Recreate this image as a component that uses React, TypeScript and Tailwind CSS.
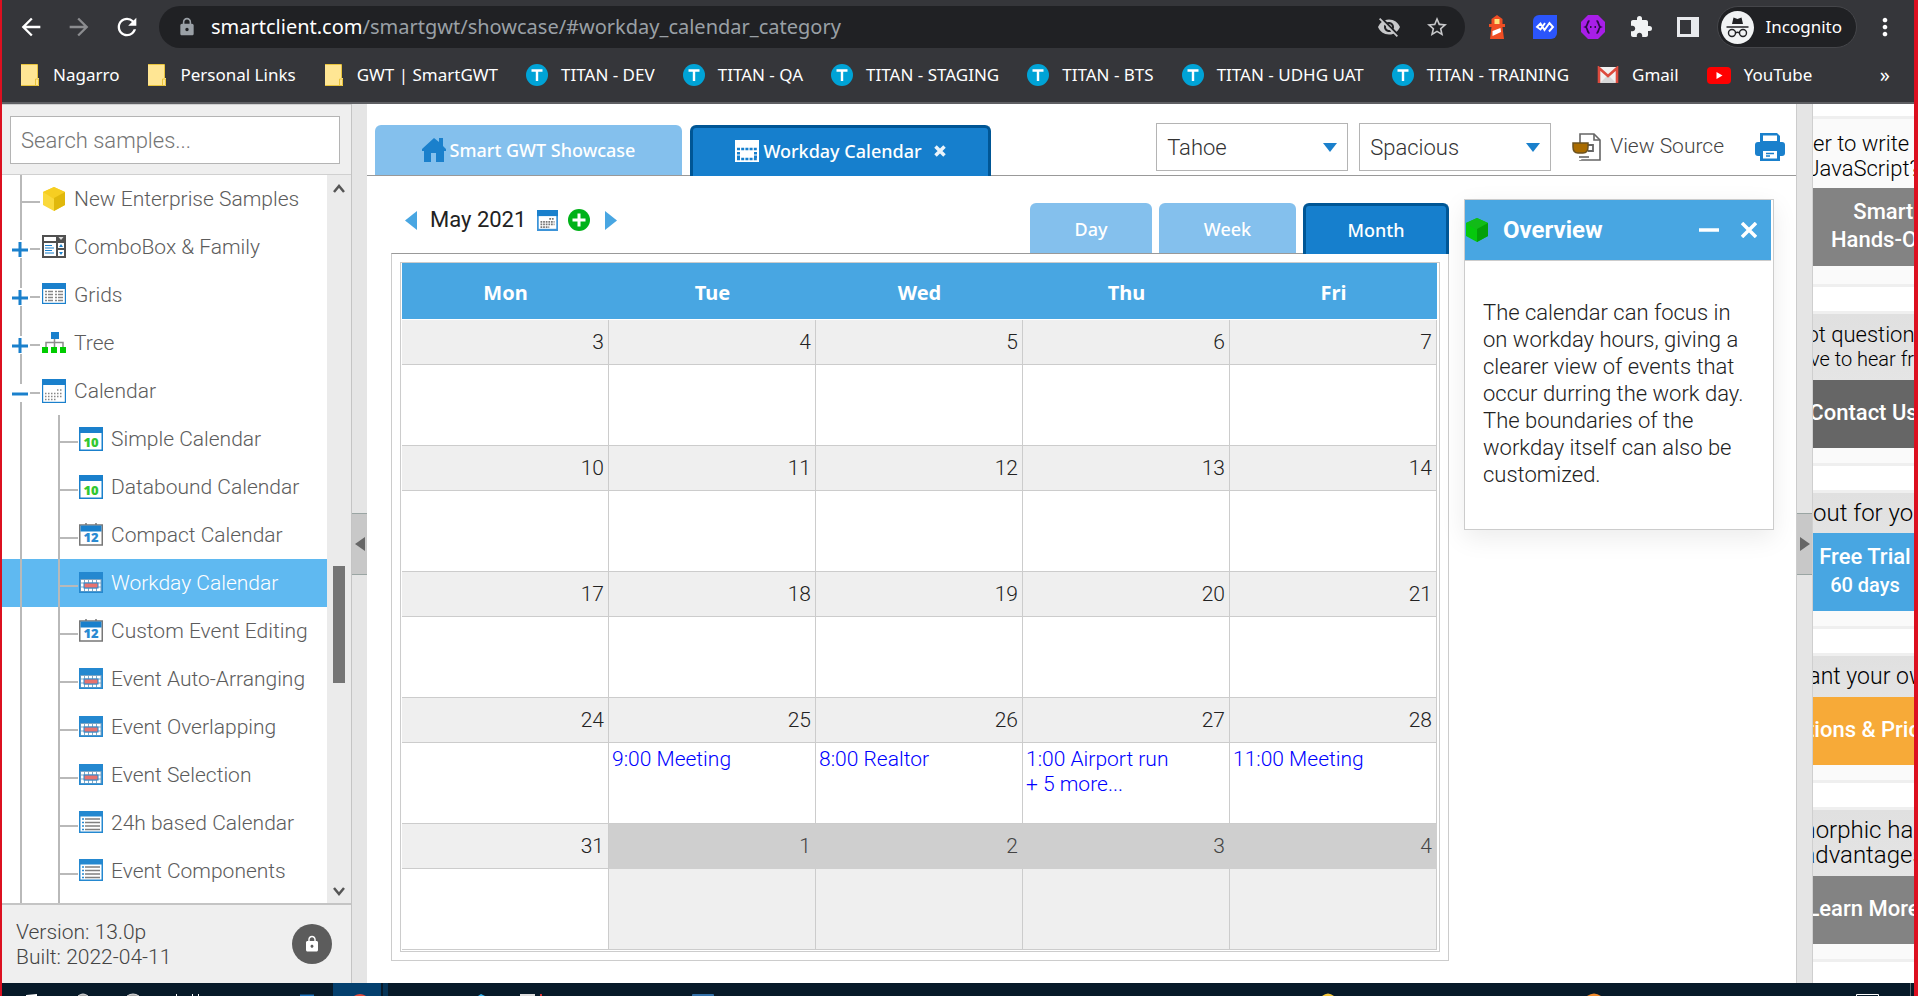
import React from "react";
import {
  MdArrowBack,
  MdArrowForward,
  MdRefresh,
  MdLock,
  MdStarBorder,
  MdExtension,
  MdMoreVert,
  MdVisibilityOff,
} from "react-icons/md";

type IconKind = "cube" | "combo" | "grid" | "tree" | "cal" | "ten" | "twelve" | "work" | "list";

function Cube({ top, left, right }: { top: string; left: string; right: string }) {
  return (
    <svg width="24" height="24" viewBox="0 0 24 24" aria-hidden="true">
      <path d="M12 0 23 5v13l-11 6L1 18V5z" fill={left} />
      <path d="M12 0 23 5l-11 7L1 5z" fill={top} />
      <path d="M12 11 23 5v13l-11 6z" fill={right} />
    </svg>
  );
}

function TreeIcon({ kind }: { kind: IconKind }) {
  if (kind === "cube") return <Cube top="#f6ce22" left="#fad93c" right="#e0b80c" />;
  if (kind === "combo")
    return (
      <svg width="24" height="24" viewBox="0 0 24 24" aria-hidden="true">
        <rect width="24" height="23" fill="#505050" />
        <path d="M2 2h12v4H2zM2 8h12v13H2zM16 8h6v5h-6zM16 15h6v6h-6z" fill="#fff" />
        <path d="M16.500 2h5l-2.500 3z" fill="#ddd" />
        <path d="M3 10.500h7M3 13h9M3 15.500h7M3 18h9" stroke="#1a80cc" strokeWidth="1.200" />
        <path d="m17 12 2-3 2 3zM17 17l2 3 2-3z" fill="#1a80cc" />
      </svg>
    );
  if (kind === "tree")
    return (
      <svg width="24" height="24" viewBox="0 0 24 24" aria-hidden="true">
        <path d="M12.500 8v4M4 16v-4.500h17V16M12.500 11v5" fill="none" stroke="#8c8c8c" strokeWidth="1.500" />
        <rect x="9" y="1" width="8" height="7" fill="#1a80cc" />
        <path d="M0 16h6v6H0zM9 16h6v6H9zM18 16h6v6h-6z" fill="#0c0" />
      </svg>
    );
  if (kind === "ten" || kind === "twelve") {
    const ten = kind === "ten";
    return (
      <svg width="24" height="24" viewBox="0 0 24 24" aria-hidden="true">
        {!ten && <path d="M7 0v3M17 0v3" stroke="#777" strokeWidth="1.500" />}
        <rect x="0.750" y={ten ? 1 : 2} width="22.500" height={ten ? 22.25 : 20} fill="#fff" stroke={ten ? "#1a80cc" : "#777"} strokeWidth="1.500" />
        <rect x={ten ? 0 : 1.5} y={ten ? 0 : 2.500} width={ten ? 24 : 21} height="6" fill="#1a80cc" />
        <text x="12" y={ten ? 19.5 : 19} textAnchor="middle" fontSize="13" fontWeight="800" fontFamily="Open Sans, sans-serif" fill={ten ? "#32c832" : "#2a8bd2"}>
          {ten ? "10" : "12"}
        </text>
      </svg>
    );
  }
  if (kind === "work")
    return (
      <svg width="24" height="24" viewBox="0 0 24 24" aria-hidden="true">
        <rect y="1" width="24" height="21" fill="#2488d0" />
        <rect x="1.500" y="8" width="21" height="12.500" fill="#7fa6c4" />
        <path
          d="M2 9h3v2.500H2zM6 9h3v2.500H6zM10 9h3v2.500h-3zM14 9h3v2.500h-3zM18 9h3.500v2.500H18zM2 12.500h3v3H2zM2 16.500h3v3.500H2zM18 12.500h3.500v3H18zM18 16.500h3.500v3.500H18zM6 17.500h3V20H6zM10 17.500h3V20h-3zM14 17.500h3V20h-3z"
          fill="#fff"
        />
        <rect x="5" y="12" width="14" height="5" fill="#e8736f" stroke="#2488d0" strokeWidth="1" />
      </svg>
    );
  if (kind === "list")
    return (
      <svg width="24" height="24" viewBox="0 0 24 24" aria-hidden="true">
        <rect y="0" width="24" height="22" fill="#2488d0" />
        <rect x="1.500" y="5.500" width="21" height="15" fill="#fff" />
        <path d="M6 8h15M6 11.500h15M6 15h15M6 18.500h15" stroke="#808080" strokeWidth="1.500" />
        <path d="M3 8h2M3 11.500h2M3 15h2M3 18.500h2" stroke="#2488d0" strokeWidth="1.500" />
      </svg>
    );
  return (
    <svg width="24" height="24" viewBox="0 0 24 24" aria-hidden="true">
      <rect width="24" height={kind === "grid" ? 21 : 24} fill="#1a80cc" />
      <rect x="1.200" y="6" width="21.600" height={kind === "grid" ? 13.8 : 16.8} fill="#fff" />
      {kind === "grid" ? (
        <>
          <path d="M3 8.500h8M13 8.500h8M3 11.500h8M13 11.500h8M3 14.500h8M13 14.500h8M3 17.500h8M13 17.500h8" stroke="#888" strokeWidth="1.300" />
          <path d="M5.500 7v12M15.500 7v12" stroke="#fff" strokeWidth="1" />
        </>
      ) : (
        <path d="M15 11h6M3 14.500h18M3 17.500h18M3 20.500h11" stroke="#888" strokeWidth="1.600" strokeDasharray="1.500 1.500" />
      )}
    </svg>
  );
}

function Guide({ level, mark }: { level: number; mark?: "plus" | "minus" }) {
  if (level === 1)
    return (
      <svg width="77" height="48" className="shrink-0" aria-hidden="true">
        <path d="M19 0v48M57 0v48M58 27h18" stroke="#b9b9b9" strokeWidth="2" />
      </svg>
    );
  return (
    <svg width="40" height="48" className="shrink-0" aria-hidden="true">
      <path d={mark ? "M19 0v17M19 35v13M28 26h10" : "M19 0v48M20 27h18"} stroke="#b9b9b9" strokeWidth="2" />
      {mark && <path d={mark === "plus" ? "M10 27h16M18 19v15" : "M10 27h16"} stroke="#1a80cc" strokeWidth="3" />}
    </svg>
  );
}

const treeRows: { label: string; icon: IconKind; level: number; mark?: "plus" | "minus"; selected?: boolean }[] = [
  { label: "New Enterprise Samples", icon: "cube", level: 0 },
  { label: "ComboBox & Family", icon: "combo", level: 0, mark: "plus" },
  { label: "Grids", icon: "grid", level: 0, mark: "plus" },
  { label: "Tree", icon: "tree", level: 0, mark: "plus" },
  { label: "Calendar", icon: "cal", level: 0, mark: "minus" },
  { label: "Simple Calendar", icon: "ten", level: 1 },
  { label: "Databound Calendar", icon: "ten", level: 1 },
  { label: "Compact Calendar", icon: "twelve", level: 1 },
  { label: "Workday Calendar", icon: "work", level: 1, selected: true },
  { label: "Custom Event Editing", icon: "twelve", level: 1 },
  { label: "Event Auto-Arranging", icon: "work", level: 1 },
  { label: "Event Overlapping", icon: "work", level: 1 },
  { label: "Event Selection", icon: "work", level: 1 },
  { label: "24h based Calendar", icon: "list", level: 1 },
  { label: "Event Components", icon: "list", level: 1 },
];

function BookmarkIcon({ kind }: { kind: string }) {
  if (kind === "folder")
    return (
      <svg width="20" height="22" viewBox="0 0 20 22" aria-hidden="true">
        <path d="M1 0h16v14h2v8H1z" fill="#ffe694" />
        <path d="M1 .500h16.500V14M1 21.500h17.500V15h-3v6" fill="none" stroke="#e9c43c" />
      </svg>
    );
  if (kind === "titan")
    return (
      <svg width="22" height="22" viewBox="0 0 22 22" aria-hidden="true">
        <circle cx="11" cy="11" r="11" fill="#00a3d6" />
        <path d="M5.500 6.500h11M11 6.500v10.500" stroke="#fff" strokeWidth="2.400" />
      </svg>
    );
  if (kind === "gmail")
    return (
      <svg width="22" height="18" viewBox="0 0 22 18" aria-hidden="true">
        <rect x="1" y="1" width="20" height="16" rx="1" fill="#f1f1f1" />
        <path d="m3 17 8-8 8 8z" fill="#d8d8d8" />
        <path d="M2 17V2l9 8 9-8v15" fill="none" stroke="#dd4b3e" strokeWidth="2.600" />
      </svg>
    );
  return (
    <svg width="24" height="17" viewBox="0 0 24 17" aria-hidden="true">
      <rect width="24" height="17" rx="4" fill="#f00" />
      <path d="m9.500 5 6 3.500-6 3.500z" fill="#fff" />
    </svg>
  );
}

const bookmarks: [string, string][] = [
  ["folder", "Nagarro"],
  ["folder", "Personal Links"],
  ["folder", "GWT | SmartGWT"],
  ["titan", "TITAN - DEV"],
  ["titan", "TITAN - QA"],
  ["titan", "TITAN - STAGING"],
  ["titan", "TITAN - BTS"],
  ["titan", "TITAN - UDHG UAT"],
  ["titan", "TITAN - TRAINING"],
  ["gmail", "Gmail"],
  ["youtube", "YouTube"],
];

function BrowserChrome() {
  return (
    <header className="h-[104px] shrink-0 border-b-2 border-[#5f6064] bg-[#35363a] font-['Noto_Sans','Open_Sans',sans-serif] text-white">
      <div className="flex h-[54px] items-center pr-[15px] pl-[15px]">
        <div className="flex w-[142px] items-center gap-5 text-[28px]">
          <button aria-label="Back"><MdArrowBack /></button>
          <button aria-label="Forward" className="text-[#8b8c8f]"><MdArrowForward /></button>
          <button aria-label="Reload"><MdRefresh /></button>
        </div>
        <div className="flex h-[42px] flex-1 items-center rounded-full bg-[#202124] pr-4 pl-[18px]">
          <MdLock className="mr-[14px] text-[20px] text-[#9aa0a6]" />
          <span className="flex-1 text-[20px] text-[#9aa0a6]">
            <span className="text-white">smartclient.com</span>/smartgwt/showcase/#workday_calendar_category
          </span>
          <button aria-label="Tracking protection" className="mr-6 text-[24px] text-[#c7c8ca]"><MdVisibilityOff /></button>
          <button aria-label="Bookmark this page" className="text-[24px] text-[#c7c8ca]"><MdStarBorder /></button>
        </div>
        <div className="ml-5 flex items-center gap-6">
          <svg width="24" height="26" viewBox="0 0 24 26" aria-hidden="true">
            <path d="M12 1 6.500 5v5H4v3h2.500L5 25h14l-1.500-12H20v-3h-2.500V5z" fill="#f04e23" />
            <rect x="9.500" y="5" width="5" height="5" fill="#ffe27a" />
            <path d="m7.500 17 8-3 .5 4-8.500 4z" fill="#fff" />
          </svg>
          <svg width="24" height="24" viewBox="0 0 24 24" aria-hidden="true">
            <path d="M6 0h18v18a6 6 0 0 1-6 6H0V6a6 6 0 0 1 6-6z" fill="#2b55fb" />
            <path d="m12 8-4.500 6.500L4 12l3.500-3.500 4 6.500 5-7 3.500 4-4 4.500" fill="none" stroke="#fff" strokeWidth="1.900" />
          </svg>
          <svg width="24" height="24" viewBox="0 0 24 24" aria-hidden="true">
            <path d="M7 0h10l7 7v10l-7 7H7l-7-7V7z" fill="#a81ee8" />
            <path d="M8.500 6C6 6 7 11 4.500 12 7 13 6 18 8.500 18M15.500 6c2.500 0 1.500 5 4 6-2.500 1-1.500 6-4 6" fill="none" stroke="#2b0b45" strokeWidth="1.800" />
            <path d="M9 12h1.500M13.500 12H15" stroke="#2b0b45" strokeWidth="2" />
          </svg>
          <MdExtension className="text-[24px] text-[#f1f3f4]" />
          <svg width="22" height="22" viewBox="0 0 22 22" aria-hidden="true">
            <path fillRule="evenodd" d="M0 1h22v20H0zM3 4v14h11V4z" fill="#e8eaed" />
          </svg>
        </div>
        <button className="ml-[18px] flex h-[42px] items-center gap-3 rounded-full border border-[#45464a] bg-[#202124] pr-[14px] pl-[3px]">
          <svg width="33" height="33" viewBox="0 0 33 33" aria-hidden="true">
            <circle cx="16.500" cy="16.500" r="16.500" fill="#f1f3f4" />
            <path d="M11 13 12.500 6.500 16.500 8l4-1.500L22 13z" fill="#202124" />
            <path d="M5.500 16h22" stroke="#202124" strokeWidth="1.500" />
            <circle cx="11" cy="22" r="3.500" fill="none" stroke="#202124" strokeWidth="1.400" />
            <circle cx="22" cy="22" r="3.500" fill="none" stroke="#202124" strokeWidth="1.400" />
            <path d="M14.500 22q2-1.500 4 0" fill="none" stroke="#202124" strokeWidth="1.300" />
          </svg>
          <span className="text-[17px]">Incognito</span>
        </button>
        <button aria-label="Menu" className="ml-[14px] text-[28px]"><MdMoreVert /></button>
      </div>
      <nav className="flex h-[42px] items-center pl-[18px] pr-6 text-[17px]">
        <ul className="flex flex-1 items-center gap-7">
          {bookmarks.map(([kind, label]) => (
            <li key={label}>
              <a href="#bookmark" className="flex items-center gap-[13px] whitespace-nowrap">
                <BookmarkIcon kind={kind} />
                {label}
              </a>
            </li>
          ))}
        </ul>
        <button aria-label="More bookmarks" className="text-[20px]">»</button>
      </nav>
    </header>
  );
}

function Sidebar() {
  return (
    <aside className="flex w-[350px] shrink-0 flex-col border-r border-[#c4c4c4] bg-white font-light">
      <div className="h-[71px] shrink-0 border-y border-[#d0d0d0] bg-[#efefef] pt-[11px] pr-[11px] pl-2">
        <input
          type="text"
          aria-label="Search samples"
          placeholder="Search samples..."
          className="h-12 w-full border border-[#b4b4b4] bg-white px-[10px] text-[22px] font-light placeholder:text-[#757575]"
        />
      </div>
      <div className="flex min-h-0 flex-1">
        <ul className="flex flex-1 flex-col overflow-hidden text-[21px] text-[#5c5c5c]">
          {treeRows.map((row) => (
            <li key={row.label} className={row.selected ? "flex h-12 shrink-0 items-center bg-[#5fb9f1] text-white" : "flex h-12 shrink-0 items-center"}>
              <Guide level={row.level} mark={row.mark} />
              <TreeIcon kind={row.icon} />
              <a href="#sample" className="ml-2 pt-0.5 whitespace-nowrap">{row.label}</a>
            </li>
          ))}
          <li className="min-h-0 flex-1 overflow-hidden">
            <svg width="77" height="48" aria-hidden="true">
              <path d="M19 0v48M57 0v48" stroke="#b9b9b9" strokeWidth="2" />
            </svg>
          </li>
        </ul>
        <div className="flex w-6 flex-col items-center bg-[#ebebeb]">
          <svg width="24" height="24" aria-hidden="true"><path d="m7 17 5-6 5 6" fill="none" stroke="#555" strokeWidth="2.500" /></svg>
          <div className="flex-[367]" />
          <div className="w-3 flex-[117] bg-[#757575]" />
          <div className="flex-[196]" />
          <svg width="24" height="24" aria-hidden="true"><path d="m7 9 5 6 5-6" fill="none" stroke="#555" strokeWidth="2.500" /></svg>
        </div>
      </div>
      <div className="flex h-20 shrink-0 items-center justify-between border-t-2 border-[#c4c4c4] bg-[#efefef] pr-[19px] pl-[14px] text-[21px] leading-[25px] text-[#444]">
        <p className="pt-px">Version: 13.0p<br />Built: 2022-04-11</p>
        <button aria-label="Lock" className="flex size-10 items-center justify-center rounded-full bg-[#5c5c5c]">
          <MdLock className="text-[18px] text-white" />
        </button>
      </div>
    </aside>
  );
}

function Splitter({ flip }: { flip?: boolean }) {
  return (
    <div className={flip ? "flex w-4 shrink-0 flex-col justify-center border-r border-[#cfcfcf] bg-[#e5e5e5]" : "flex w-[15px] shrink-0 flex-col justify-center bg-[#e5e5e5]"}>
      <button aria-label={flip ? "Collapse right panel" : "Collapse left panel"} className="flex h-[62px] items-center justify-center border-y border-[#9aa5a3] bg-[#c8c8c8]">
        <svg width="12" height="16" viewBox="0 0 12 16" aria-hidden="true">
          <path d={flip ? "M1 1v14l10-7z" : "M11 1v14L1 8z"} fill="#666" />
        </svg>
      </button>
    </div>
  );
}

function SelectBox({ label, value }: { label: string; value: string }) {
  return (
    <div className="relative">
      <select aria-label={label} defaultValue={value} className="h-12 w-48 appearance-none border border-[#b4b4b4] bg-white px-[10px] text-[22px] font-light text-[#333]">
        <option>{value}</option>
      </select>
      <svg width="14" height="9" className="pointer-events-none absolute top-5 right-[11px]" aria-hidden="true">
        <path d="M0 0h14L7 9z" fill="#1a80cc" />
      </svg>
    </div>
  );
}

function TopBar() {
  return (
    <div className="flex h-[72px] items-end border-b border-[#999] pl-2">
      <div role="tablist" className="flex gap-2 font-['Noto_Sans','Open_Sans',sans-serif] text-[18px] font-medium text-white">
        <button role="tab" className="flex h-[50px] w-[307px] items-center justify-center gap-1 rounded-t-md bg-[#84c0ed]">
          <svg width="24" height="24" viewBox="0 0 24 24" aria-hidden="true">
            <path d="M12 0 0 11v2h2v11h7v-9h5v9h8V13h2v-2l-3-3V0h-4v4z" fill="#1a80cc" />
          </svg>
          Smart GWT Showcase
        </button>
        <button role="tab" aria-selected="true" className="-mb-px flex h-[51px] w-[301px] items-center justify-center gap-1 rounded-t-md border-x-3 border-t-3 border-[#005695] bg-[#167fcd] pb-0.5">
          <svg width="24" height="22" viewBox="0 0 24 22" aria-hidden="true">
            <rect width="24" height="22" fill="#fff" />
            <path d="M2 9h20M2 19h20" stroke="#167fcd" strokeWidth="2.500" strokeDasharray="3 1.200" />
            <path d="M3.500 12v6M20.500 12v6" stroke="#167fcd" strokeWidth="3" strokeDasharray="2.400 1.200" />
          </svg>
          Workday Calendar
          <svg width="12" height="12" viewBox="0 0 12 12" className="ml-2" aria-hidden="true">
            <path d="m1.500 1.500 9 9M10.500 1.500l-9 9" stroke="#eaf4fb" strokeWidth="3.500" />
          </svg>
        </button>
      </div>
      <div className="mb-1 ml-auto flex items-center gap-[11px] pr-[11px]">
        <SelectBox label="Skin" value="Tahoe" />
        <SelectBox label="Density" value="Spacious" />
        <button className="ml-[10px] flex items-center gap-[9px] text-[21px] font-light text-[#444]">
          <svg width="29" height="28" viewBox="0 0 29 28" aria-hidden="true">
            <path d="M8 1h14l6 6v20H8z" fill="#fff" stroke="#666" strokeWidth="1.600" />
            <path d="M22 1v6h6" fill="none" stroke="#666" strokeWidth="1.600" />
            <path d="M16 12h5v6h-5" fill="none" stroke="#666" strokeWidth="1.800" />
            <path d="M8 10v17" stroke="#fff" strokeWidth="2.500" />
            <path d="M1 10h15v4q0 6-5 6H6q-5 0-5-6z" fill="#aa6c00" stroke="#6b5220" strokeWidth="1.500" />
            <path d="M7 24h10" stroke="#666" strokeWidth="1.600" />
          </svg>
          View Source
        </button>
        <button aria-label="Print" className="ml-5">
          <svg width="30" height="28" viewBox="0 0 30 28" aria-hidden="true">
            <path d="M5 0h17l3 3v6H5z" fill="#1a80cc" />
            <path d="M8 2.500h14V8H8z" fill="#fff" />
            <rect y="9" width="30" height="14" rx="3" fill="#1a80cc" />
            <path d="M5 16h20v12H5z" fill="#1a80cc" />
            <path d="M8 18h14v7.500H8z" fill="#fff" />
            <path d="M11 20.500h8M11 23h4" stroke="#1a80cc" strokeWidth="1.400" />
          </svg>
        </button>
      </div>
    </div>
  );
}

const weeks: { days: number[]; events?: Record<number, string[]>; otherFrom?: number }[] = [
  { days: [3, 4, 5, 6, 7] },
  { days: [10, 11, 12, 13, 14] },
  { days: [17, 18, 19, 20, 21] },
  {
    days: [24, 25, 26, 27, 28],
    events: { 25: ["9:00 Meeting"], 26: ["8:00 Realtor"], 27: ["1:00 Airport run", "+ 5 more..."], 28: ["11:00 Meeting"] },
  },
  { days: [31, 1, 2, 3, 4], otherFrom: 1 },
];

function Calendar() {
  return (
    <section className="min-w-0 flex-1">
      <div className="flex h-[53px] items-end">
        <div className="mb-[19px] flex items-center pl-[14px] text-[22px] leading-7 text-[#222]">
          <button aria-label="Previous month">
            <svg width="12" height="19" aria-hidden="true"><path d="M12 0v19L0 9.500z" fill="#48a6e2" /></svg>
          </button>
          <span className="ml-[13px]">May 2021</span>
          <button aria-label="Pick a month" className="ml-[11px]">
            <svg width="21" height="21" viewBox="0 0 24 24" aria-hidden="true">
              <rect width="24" height="24" fill="#3d94d8" />
              <rect width="24" height="7" fill="#1a80cc" />
              <rect x="2" y="7" width="20" height="14.500" fill="#fff" />
              <path d="M14 10h6M4 13.500h16M4 16.500h16M4 19.500h10" stroke="#777" strokeWidth="2" strokeDasharray="2 1" />
            </svg>
          </button>
          <button aria-label="Add event" className="ml-[10px]">
            <svg width="22" height="22" viewBox="0 0 22 22" aria-hidden="true">
              <circle cx="11" cy="11" r="11" fill="#00b219" />
              <path d="M11 4.500v13M4.500 11h13" stroke="#fff" strokeWidth="3" />
            </svg>
          </button>
          <button aria-label="Next month" className="ml-[15px]">
            <svg width="12" height="19" aria-hidden="true"><path d="M0 0v19l12-9.500z" fill="#48a6e2" /></svg>
          </button>
        </div>
        <div role="tablist" className="ml-auto flex gap-[7px] font-['Noto_Sans','Open_Sans',sans-serif] text-[18px] font-medium text-white">
          <button role="tab" className="h-[50px] w-[122px] rounded-t-md bg-[#84c0ed] pt-0.5">Day</button>
          <button role="tab" className="h-[50px] w-[137px] rounded-t-md bg-[#84c0ed] pt-0.5">Week</button>
          <button role="tab" aria-selected="true" className="relative -mb-px h-[51px] w-[146px] rounded-t-md border-x-3 border-t-3 border-[#005695] bg-[#167fcd]">Month</button>
        </div>
      </div>
      <div className="border border-t-[#999] border-r-[#ccc] border-b-[#ccc] border-l-[#ccc] p-2">
        <div className="border border-[#ccc] pr-0.5 pb-px pl-px">
          <table className="w-full table-fixed border-separate border-spacing-0">
            <thead>
              <tr className="h-[57px]">
                {["Mon", "Tue", "Wed", "Thu", "Fri"].map((d) => (
                  <th key={d} className="border-b border-white bg-[#48a6e2] p-0 pt-1 font-['Noto_Sans','Open_Sans',sans-serif] text-[20px] font-bold text-white">{d}</th>
                ))}
              </tr>
            </thead>
            {weeks.map((week) => (
              <tbody key={week.days[0]}>
                <tr className="h-[45px]">
                  {week.days.map((day, i) => (
                    <td
                      key={day}
                      className={
                        week.otherFrom !== undefined && i >= week.otherFrom
                          ? "border-r border-b border-[#cfcfcf] bg-[#cfcfcf] p-0 pt-0.5 pr-1 text-right text-[21px] font-light text-[#444]"
                          : "border-r border-b border-[#ccc] bg-[#efefef] p-0 pt-0.5 pr-1 text-right text-[21px] font-light text-[#222]"
                      }
                    >
                      {day}
                    </td>
                  ))}
                </tr>
                <tr className="h-[81px]">
                  {week.days.map((day, i) => (
                    <td
                      key={day}
                      className={
                        week.otherFrom !== undefined && i >= week.otherFrom
                          ? "border-r border-b border-[#ccc] bg-[#efefef] p-0"
                          : "border-r border-b border-[#ccc] p-0 pt-1 pl-[3px] align-top text-[21px] leading-[25px] font-light whitespace-nowrap text-[#00f]"
                      }
                    >
                      {week.events?.[day]?.map((text) => (
                        <a key={text} href="#event" className="block">{text}</a>
                      ))}
                    </td>
                  ))}
                </tr>
              </tbody>
            ))}
          </table>
        </div>
      </div>
    </section>
  );
}

function Overview() {
  return (
    <section className="w-[310px] shrink-0 self-start border border-[#ccc] bg-white shadow-[0_8px_24px_rgba(0,0,0,0.08)]">
      <div className="mr-0.5 flex h-[61px] items-center border-b border-[#ccc] bg-[#48a6e2] pr-[14px] text-white">
        <Cube top="#12bb18" left="#06c80c" right="#04a008" />
        <h2 className="ml-[14px] flex-1 text-[24px] font-bold">Overview</h2>
        <button aria-label="Minimize" className="mr-[22px]">
          <svg width="20" height="16" aria-hidden="true"><path d="M0 8h20" stroke="#fff" strokeWidth="3.500" /></svg>
        </button>
        <button aria-label="Close">
          <svg width="16" height="16" aria-hidden="true"><path d="m1 1 14 14M15 1 1 15" stroke="#fff" strokeWidth="3.500" /></svg>
        </button>
      </div>
      <p className="px-[18px] pt-[38px] pb-[41px] text-[22px] leading-[27px] font-light text-[#222]">
        The calendar can focus in on workday hours, giving a clearer view of events that occur durring the work day. The boundaries of the workday itself can also be customized.
      </p>
    </section>
  );
}

function PromoPanel() {
  const card = "flex flex-col border-y-3 border-[#efefef] bg-linear-to-b from-[#e0e0e0] to-[#ebebeb] leading-[25px] text-black font-light";
  const line = "flex justify-center whitespace-nowrap";
  const button = "flex h-[68px] w-full items-center justify-center whitespace-nowrap pb-1 text-[22px] font-medium text-white";
  return (
    <aside className="flex w-[101px] shrink-0 flex-col gap-6 overflow-hidden bg-white pt-3">
      <div className="flex flex-col border-y-3 border-[#efefef] bg-[#fafafa] pt-3 text-[22px] leading-[25px] font-light text-black">
        <p className="whitespace-nowrap">er to write</p>
        <p className="flex justify-center whitespace-nowrap">JavaScript?</p>
        <a href="#trial" className="mt-[7px] mb-[18px] flex h-[78px] items-center bg-[#838383] pb-0.5 pl-[18px] leading-7 font-medium text-white">
          <span className="text-center whitespace-nowrap">Smart GWT<br />Hands-On Trials</span>
        </a>
      </div>
      <div className={card}>
        <p className={line + " pt-2 text-[22px]"}>Got questions?</p>
        <p className={line + " mb-2 text-[20px]"}>We'd love to hear from you</p>
        <a href="#contact" className={button + " bg-[#666]"}>Contact Us</a>
        <div className="h-[15px] bg-[#fafafa]" />
      </div>
      <div className={card}>
        <p className="pt-2 pb-[7px] text-[24px] whitespace-nowrap">out for you</p>
        <a href="#free" className="flex h-[78px] flex-col items-center justify-center bg-[#48a6e2] pb-0.5 pl-[3px] text-[22px] leading-[29px] font-medium whitespace-nowrap text-white">
          <span>Free Trial</span>
          <span className="text-[20px]">60 days</span>
        </a>
        <div className="h-[15px] bg-[#fafafa]" />
      </div>
      <div className={card}>
        <p className={line + " pt-2 pb-2 text-[23px]"}>Want your own</p>
        <a href="#pricing" className={button + " bg-[#f7aa38]"}>Editions &amp; Pricing</a>
        <div className="h-[15px] bg-[#fafafa]" />
      </div>
      <div className={card}>
        <p className={line + " pt-2 text-[24px]"}>Isomorphic has the</p>
        <p className={line + " pb-2 text-[24px]"}>advantages</p>
        <a href="#more" className={button + " bg-[#838383]"}>Learn More</a>
        <div className="h-[15px] bg-[#fafafa]" />
      </div>
    </aside>
  );
}

function Taskbar() {
  return (
    <footer className="flex h-[13px] shrink-0 justify-between bg-[#071a29]">
      <svg width="740" height="13" aria-hidden="true">
        <rect x="331" width="48" height="13" fill="#04406e" />
        <rect x="381" width="5" height="13" fill="#053457" />
        <path d="M24 13v-1l11-1v2z" fill="#fff" />
        <path d="M76 13q5-4 10 0M125 13q6-4 12 0" fill="#aaa" stroke="#ddd" strokeWidth="1" />
        <path d="M174.500 11v2M190.500 11v2M196.500 11v2" stroke="#fff" />
        <path d="M298 11.500h14v2h-14z" fill="#1b6fb8" />
        <path d="M352 13q6-4 12 0z" fill="#e2493a" />
        <path d="M476 13l3-2 4 2z" fill="#36b5f0" />
        <path d="M518 11h15v2h-15z" fill="#ddd" />
        <path d="M538 11h2v2h-2z" fill="#d33" />
        <rect x="690" y="11" width="22" height="3" rx="1" fill="#3270a8" />
      </svg>
      <svg width="600" height="13" aria-hidden="true">
        <path d="M8 13q6-5 12 0z" fill="#f4c63a" />
        <path d="M273 13q7-5 14 0z" fill="#f08a2c" />
        <path d="M542.500 13v-1.500h22V13" fill="none" stroke="#fff" />
        <rect x="596" width="1" height="13" fill="#5f6a73" />
      </svg>
    </footer>
  );
}

export default function App() {
  return (
    <div className="flex h-screen flex-col overflow-hidden border-r-4 border-l-2 border-[#dc1020] bg-white font-[Roboto,sans-serif]">
      <BrowserChrome />
      <main className="flex min-h-0 flex-1">
        <Sidebar />
        <Splitter />
        <div className="flex min-w-0 flex-1 flex-col border-r border-[#ccc]">
          <TopBar />
          <div className="flex gap-[15px] pr-[22px] pl-6">
            <div className="flex min-w-0 flex-1 pt-6">
              <Calendar />
            </div>
            <div className="flex pt-[23px]">
              <Overview />
            </div>
          </div>
        </div>
        <Splitter flip />
        <PromoPanel />
      </main>
      <Taskbar />
    </div>
  );
}
